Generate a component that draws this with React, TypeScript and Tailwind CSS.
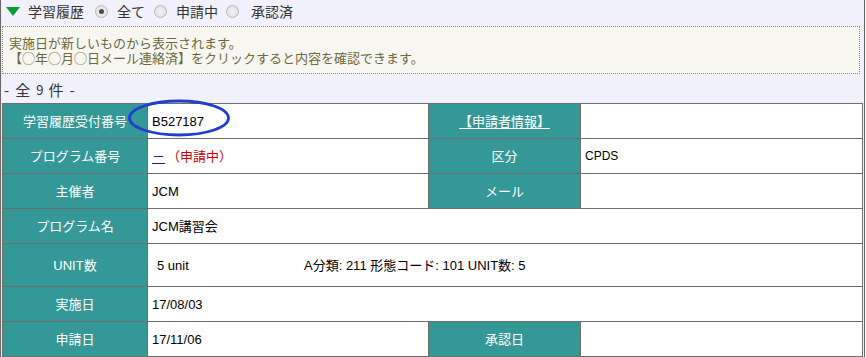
import React from "react";

const font = { fontFamily: '"Liberation Sans", "Noto Sans CJK JP", sans-serif' };
const cjk = { fontFamily: '"Noto Sans CJK JP", "Liberation Sans", sans-serif' };

function Radio({ checked }: { checked?: boolean }) {
  return (
    <span className="inline-flex h-[13px] w-[13px] items-center justify-center rounded-full border border-[#b8b8b8] bg-[radial-gradient(circle,#f4f4f4_0%,#dcdcdc_100%)]">
      {checked && <span className="h-[5px] w-[5px] rounded-full bg-[#4a4a4a]" />}
    </span>
  );
}

const th = "bg-[#349896] text-white text-center font-normal border border-[#6e6e6e] px-1";
const td = "bg-white text-black text-left border border-[#6e6e6e] px-[4px]";

export default function App() {
  return (
    <div className="h-[357px] w-[866px] overflow-hidden bg-white" style={font}>
      <div className="h-[357px] w-[865px] border-x border-[#666] bg-[#f1f1fd] text-[13px] leading-[15px]">
        {/* filter bar */}
        <div className="flex h-[23px] items-center pl-[5px] text-[14px] text-[#333]" style={cjk}>
          <svg width="14" height="10" viewBox="0 0 14 10" className="mt-[1px]">
            <polygon points="0,0 14,0 7,9" fill="#0a9a3a" />
          </svg>
          <span className="ml-[8px]">学習履歴</span>
          <span className="ml-[11px] flex items-center"><Radio checked /></span>
          <span className="ml-[9px]">全て</span>
          <span className="ml-[9px] flex items-center"><Radio /></span>
          <span className="ml-[9px]">申請中</span>
          <span className="ml-[8px] flex items-center"><Radio /></span>
          <span className="ml-[12px]">承認済</span>
        </div>

        {/* notice */}
        <div className="ml-[1px] mr-[4px] mt-[3px] h-[48px] border border-dotted border-[#8a8a8a] bg-[#f8f6f0] px-[6px] pt-[9px] text-[13px] leading-[15px] text-[#6a6a3c]">
          <p>
            実施日が新しいものから表示されます。
            <br />
            【◯年◯月◯日メール連絡済】をクリックすると内容を確認できます。
          </p>
        </div>

        <div className="flex h-[29px] items-center pl-[3px] pt-[2px] text-[15px] text-[#333]" style={cjk}>
          -<span className="ml-[6px]">全</span>
          <span className="ml-[6px] text-[13px]">9</span>
          <span className="ml-[5px]">件</span>
          <span className="ml-[6px]">-</span>
        </div>

        {/* detail table */}
        <div className="relative ml-[1px]">
          <table className="w-[861px] table-fixed border-collapse">
            <colgroup>
              <col className="w-[145px]" />
              <col className="w-[281px]" />
              <col className="w-[152px]" />
              <col />
            </colgroup>
            <tbody>
              <tr className="h-[35px]">
                <th className={th}>学習履歴受付番号</th>
                <td className={td}>B527187</td>
                <th className={th}>
                  <a className="underline underline-offset-2">【申請者情報】</a>
                </th>
                <td className={td}></td>
              </tr>
              <tr className="h-[35px]">
                <th className={th}>プログラム番号</th>
                <td className={td}>
                  <a className="text-[#1a2a7a] underline underline-offset-2">－</a>
                  <span className="ml-[2px] text-[#d00000]">（申請中）</span>
                </td>
                <th className={th}>区分</th>
                <td className={td}>
                  <span className="text-[12px]">CPDS</span>
                </td>
              </tr>
              <tr className="h-[35px]">
                <th className={th}>主催者</th>
                <td className={td}>JCM</td>
                <th className={th}>メール</th>
                <td className={td}></td>
              </tr>
              <tr className="h-[35px]">
                <th className={th}>プログラム名</th>
                <td className={td} colSpan={3}>JCM講習会</td>
              </tr>
              <tr className="h-[43px]">
                <th className={th}>UNIT数</th>
                <td className={td} colSpan={3}>
                  <div className="flex">
                    <span className="w-[152px] pl-[5px]">5 unit</span>
                    <span>A分類: 211 形態コード: 101 UNIT数: 5</span>
                  </div>
                </td>
              </tr>
              <tr className="h-[35px]">
                <th className={th}>実施日</th>
                <td className={td} colSpan={3}>17/08/03</td>
              </tr>
              <tr className="h-[35px]">
                <th className={th}>申請日</th>
                <td className={td}>17/11/06</td>
                <th className={th}>承認日</th>
                <td className={td}></td>
              </tr>
            </tbody>
          </table>
          {/* hand-drawn highlight around the receipt number */}
          <svg
            className="pointer-events-none absolute left-[124px] top-[-4px]"
            width="106"
            height="40"
            viewBox="0 0 106 40"
          >
            <ellipse cx="53" cy="19" rx="49.5" ry="17" fill="none" stroke="#1f3fd0" strokeWidth="2.8" />
          </svg>
        </div>
      </div>
    </div>
  );
}
